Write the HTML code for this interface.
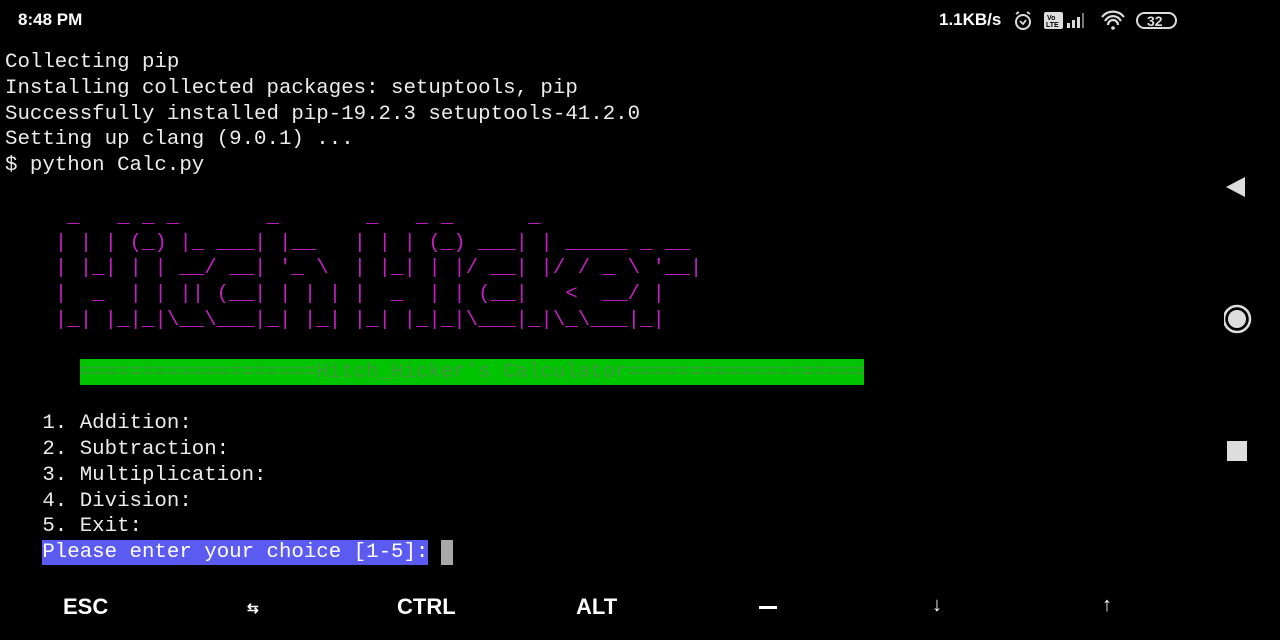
<!DOCTYPE html>
<html><head><style>
body{margin:0;width:1280px;height:640px;background:#000;overflow:hidden;position:relative;font-family:"Liberation Sans",sans-serif;color:#fff}
#t{position:absolute;left:5px;top:50px;font-family:"Liberation Mono",monospace;font-size:20.75px;line-height:25.8px;white-space:pre;color:#ececec;margin:0}
.m{color:#c21fc2}
.g{background:#00c400;color:#3e9a3e;padding:2px 0 1px}
.b{background:#5b5bf2;color:#fff;padding:1px 0}
.c{background:#a8a8a8;padding:1px 0}
.sb{position:absolute;top:10px;font-weight:bold;font-size:17px}
.k{position:absolute;top:594px;font-weight:bold;font-size:22px;color:#fff}
</style></head><body>
<div class="sb" style="left:18px">8:48 PM</div>
<div class="sb" style="left:939px">1.1KB/s</div>
<svg style="position:absolute;left:1013px;top:9px" width="170" height="24">
<circle cx="10" cy="13" r="7" fill="none" stroke="#ddd" stroke-width="2"/><path d="M7 12l3 3 3-4M3 5l3-2M17 5l-3-2" stroke="#ddd" stroke-width="1.8" fill="none"/>
<rect x="31" y="3" width="19" height="17" rx="2" fill="#ddd"/><text x="34" y="11" font-size="7" font-weight="bold" fill="#000" font-family="Liberation Sans">Vo</text><text x="33" y="18" font-size="7" font-weight="bold" fill="#000" font-family="Liberation Sans">LTE</text>
<rect x="54" y="14" width="3" height="5" fill="#ddd"/><rect x="59" y="11" width="3" height="8" fill="#ddd"/><rect x="64" y="8" width="3" height="11" fill="#ddd"/><rect x="69" y="4" width="2" height="15" fill="#777"/>
<path d="M89 8a14 14 0 0 1 22 0M92 12a9 9 0 0 1 16 0M95 16a4 4 0 0 1 10 0" stroke="#ddd" stroke-width="2.2" fill="none"/><circle cx="100" cy="19" r="1.8" fill="#ddd"/>
<rect x="124" y="4" width="39" height="15" rx="7.5" fill="none" stroke="#ddd" stroke-width="2"/><text x="134" y="17" font-size="14" font-weight="bold" fill="#ddd" font-family="Liberation Sans">32</text>
</svg>
<pre id="t">Collecting pip
Installing collected packages: setuptools, pip
Successfully installed pip-19.2.3 setuptools-41.2.0
Setting up clang (9.0.1) ...
$ python Calc.py

<span class="m">     _   _ _ _       _       _   _ _      _
    | | | (_) |_ ___| |__   | | | (_) ___| | _____ _ __
    | |_| | | __/ __| '_ \  | |_| | |/ __| |/ / _ \ '__|
    |  _  | | || (__| | | | |  _  | | (__|   &lt;  __/ |
    |_| |_|_|\__\___|_| |_| |_| |_|_|\___|_|\_\___|_|</span>

      <span class="g">===================Hitch_Hicker's Calculator===================</span>

   1. Addition:
   2. Subtraction:
   3. Multiplication:
   4. Division:
   5. Exit:
   <span class="b">Please enter your choice [1-5]:</span> <span class="c"> </span></pre>
<svg style="position:absolute;left:1224px;top:176px" width="30" height="300">
<path d="M2 11L21 1V21Z" fill="#ddd"/>
<circle cx="13" cy="143" r="13" fill="none" stroke="#ddd" stroke-width="2.5"/><circle cx="13" cy="143" r="9" fill="#ddd"/>
<rect x="3" y="265" width="20" height="20" fill="#ddd"/>
</svg>
<div class="k" style="left:63px">ESC</div>
<div class="k" style="left:247px;font-size:14px;top:600px">⇆</div>
<div class="k" style="left:397px">CTRL</div>
<div class="k" style="left:576px">ALT</div>
<div style="position:absolute;left:759px;top:606px;width:18px;height:3px;background:#fff"></div>
<div class="k" style="left:932px;font-size:20px">↓</div>
<div class="k" style="left:1102px;font-size:20px">↑</div>
</body></html>
